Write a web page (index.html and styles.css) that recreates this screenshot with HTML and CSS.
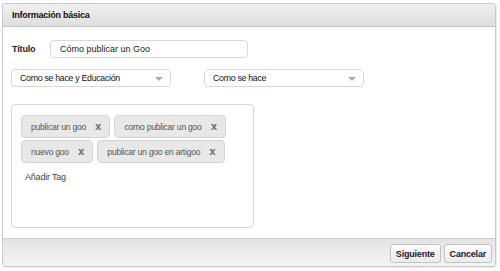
FILE: index.html
```html
<!DOCTYPE html>
<html lang="es">
<head>
  <meta charset="UTF-8">
  <title>Información básica</title>
  <link rel="stylesheet" href="styles.css">
</head>
<body>

  <!-- Panel -->
  <div class="panel">
    <div class="panel-header">Información básica</div>

    <div class="panel-body">
      <div class="row-title">
        <label class="label">Título</label>
        <div class="input">Cómo publicar un Goo</div>
      </div>

      <div class="row-selects">
        <div class="select select-1">Como se hace y Educación<span class="arrow"></span></div>
        <div class="select select-2">Como se hace<span class="arrow"></span></div>
      </div>

      <div class="tags-box">
        <div class="tags">
          <span class="tag">publicar un goo<b class="x">x</b></span>
          <span class="tag">como publicar un goo<b class="x">x</b></span>
          <span class="tag">nuevo goo<b class="x">x</b></span>
          <span class="tag">publicar un goo en artigoo<b class="x">x</b></span>
        </div>
        <div class="add-tag">Añadir Tag</div>
      </div>
    </div>

    <div class="panel-footer">
      <button class="btn">Siguiente</button>
      <button class="btn">Cancelar</button>
    </div>
  </div>

</body>
</html>
```

FILE: styles.css
```css
/* General */
body {
  margin: 0;
  padding: 3px 4px 4px 2px;
  font-family: 'Liberation Sans', Arial, sans-serif;
  font-size: 9px;
  color: #222;
  background-color: #fff;
}

/* Panel */
.panel {
  width: 492px;
  height: 262px;
  border: 1px solid #c8c8c8;
  border-radius: 3px;
  display: flex;
  flex-direction: column;
  box-shadow: 1px 1px 1px rgba(0, 0, 0, 0.08);
  overflow: hidden;
}

.panel-header {
  height: 22px;
  line-height: 22px;
  padding-left: 9px;
  font-weight: bold;
  font-size: 9px;
  letter-spacing: -0.25px;
  color: #111;
  background: linear-gradient(#f0f0f0, #dedede);
  border-bottom: 1px solid #c4c4c4;
}

.panel-body {
  flex: 1;
  padding: 13px 8px 0 8px;
}

.row-title {
  display: flex;
  align-items: center;
}

.label {
  font-weight: bold;
  width: 38px;
  padding-left: 1px;
  letter-spacing: -0.2px;
}

.input {
  width: 187px;
  height: 16px;
  line-height: 16px;
  padding-left: 9px;
  border: 1px solid #d8d8d8;
  border-radius: 4px;
  color: #222;
}

.row-selects {
  display: flex;
  gap: 33px;
  margin-top: 11px;
}

.select {
  position: relative;
  width: 150px;
  height: 16px;
  line-height: 16px;
  padding-left: 8px;
  border: 1px solid #d8d8d8;
  border-radius: 4px;
  color: #111;
  font-size: 8.8px;
  letter-spacing: -0.3px;
}

.select .arrow {
  position: absolute;
  right: 7px;
  top: 7px;
  border-left: 4px solid transparent;
  border-right: 4px solid transparent;
  border-top: 4px solid #aaa;
}

/* Tags */
.tags-box {
  width: 232px;
  height: 112px;
  margin-top: 17px;
  padding: 10px 0 0 9px;
  border: 1px solid #d8d8d8;
  border-radius: 4px;
}

.tags {
  display: flex;
  flex-wrap: wrap;
  gap: 2px 4px;
  width: 215px;
}

.tag {
  display: inline-flex;
  align-items: center;
  white-space: nowrap;
  height: 21px;
  padding: 0 8px 0 9px;
  gap: 9px;
  background-color: #e8e8e8;
  border: 1px solid #d4d4d4;
  border-radius: 4px;
  color: #555;
  font-size: 8.6px;
  letter-spacing: -0.25px;
}

.tag .x {
  color: #777;
  font-size: 10px;
  font-family: 'DejaVu Sans', sans-serif;
  font-weight: bold;
  letter-spacing: 0;
}

.add-tag {
  margin-top: 9px;
  padding-left: 4px;
  color: #444;
  letter-spacing: -0.2px;
}

/* Footer */
.panel-footer {
  height: 27px;
  border-top: 1px solid #d2d2d2;
  background: linear-gradient(#e3e3e3, #f4f4f4);
  display: flex;
  justify-content: flex-end;
  align-items: center;
  gap: 3px;
  padding-right: 3px;
}

.btn {
  height: 19px;
  padding: 0 5px;
  font-family: 'Liberation Sans', Arial, sans-serif;
  font-size: 9px;
  font-weight: bold;
  letter-spacing: -0.2px;
  color: #1a1a2a;
  background: linear-gradient(#fdfdfd, #ececec);
  border: 1px solid #c2c2c2;
  border-radius: 3px;
  margin-top: 2px;
}
```
